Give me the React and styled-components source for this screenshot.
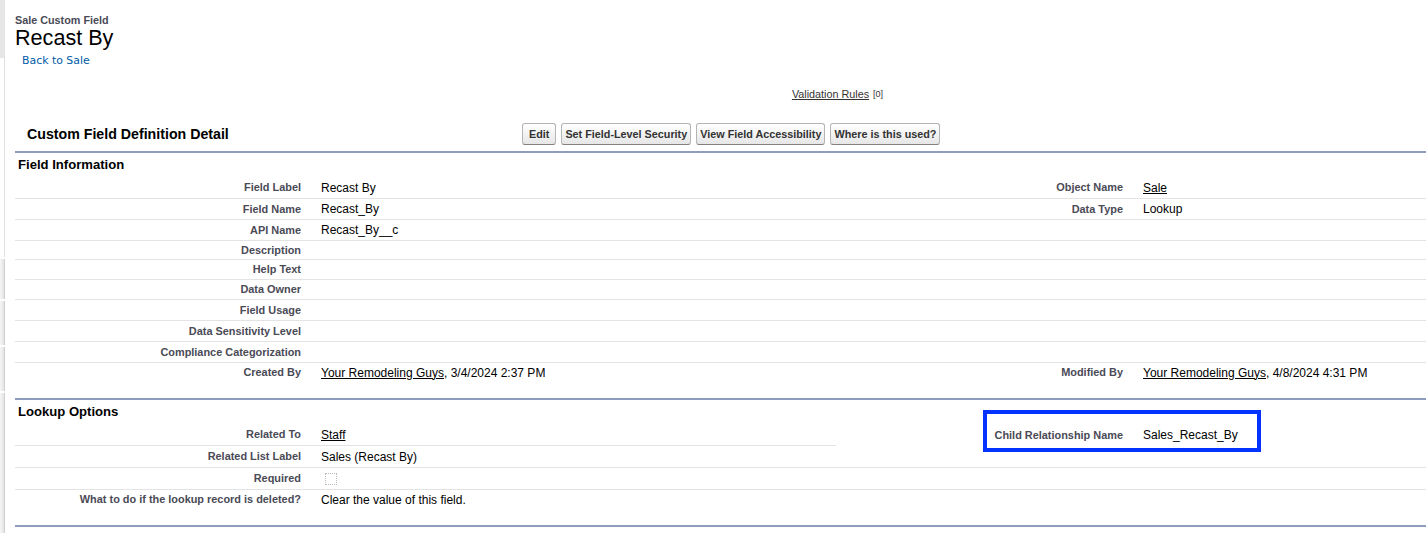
import React from "react";
import styled, { createGlobalStyle } from "styled-components";

const Global = createGlobalStyle`
  html, body { margin: 0; padding: 0; background: #fff; }
  body { font-family: "Liberation Sans", Arial, sans-serif; color: #000; overflow: hidden; }
  * { box-sizing: border-box; }
`;

const Page = styled.div`
  display: flex;
  width: 1426px;
  height: 533px;
  background: #fff;
`;

const Rail = styled.div`
  width: 5px;
  flex: none;
  display: flex;
  flex-direction: column;
`;

const RailTop = styled.div`
  height: 58px;
  background: #e6e6e6;
`;

const RailPanel = styled.div`
  height: 199px;
  border-right: 1px solid #dde1e6;
  background: #fff;
`;

const RailTab = styled.div`
  height: ${(p) => p.$h}px;
  flex: ${(p) => (p.$grow ? 1 : "none")};
  margin-top: 2px;
  background: linear-gradient(to right, #f6f6f6, #e3e3e3);
  border-right: 1px solid #cfcfcf;
`;

const Main = styled.div`
  flex: 1;
  min-width: 0;
  padding-left: 10px;
`;

const TitleBlock = styled.div`
  padding-top: 14px;
`;

const PageType = styled.div`
  font-size: 10.8px;
  line-height: 13px;
  font-weight: bold;
  color: #4a4a56;
`;

const PageTitle = styled.h1`
  margin: 0;
  font-size: 21.6px;
  line-height: 22px;
  font-weight: normal;
  color: #000;
`;

const Breadcrumb = styled.div`
  margin-top: 5px;
  padding-left: 7px;
  font-family: "DejaVu Sans", Verdana, sans-serif;
  font-size: 10.9px;
  line-height: 13px;
  a { color: #015ba7; text-decoration: none; }
`;

const LinkBar = styled.div`
  margin-top: 21px;
  display: flex;
  justify-content: center;
  padding-left: 234px;
  font-size: 10.8px;
  line-height: 13px;
  color: #333;
`;

const Linklet = styled.span`
  color: #333;
  text-decoration: underline;
`;

const Count = styled.span`
  font-size: 9px;
  margin-left: 4px;
  color: #333;
`;

const BlockHeader = styled.div`
  margin-top: 22px;
  display: flex;
  align-items: center;
  padding-bottom: 6px;
`;

const BlockTitle = styled.h2`
  margin: 0;
  width: 507px;
  padding-left: 12px;
  font-size: 14.2px;
  line-height: 18px;
  font-weight: bold;
  color: #000;
`;

const Buttons = styled.div`
  display: flex;
  gap: 5px;
`;

const Button = styled.button`
  height: 22px;
  padding: 0 3px;
  margin: 0;
  font-family: "Liberation Sans", Arial, sans-serif;
  font-size: 10.8px;
  font-weight: bold;
  color: #333;
  white-space: pre;
  border: 1px solid #b5b5b5;
  border-bottom-color: #7f7f7f;
  border-radius: 3px;
  background: linear-gradient(to bottom, #ffffff 0%, #f4f4f4 45%, #e6e6e6 100%);
`;

const Section = styled.section`
  border-top: 2px solid #8e9dbe;
  padding-bottom: 16px;
`;

const SectionTitle = styled.h3`
  margin: 0;
  height: 24px;
  padding: 4px 3px 0;
  font-size: 13.1px;
  line-height: 16px;
  font-weight: bold;
  color: #000;
`;

const Row = styled.div`
  position: relative;
  display: grid;
  grid-template-columns: 296px 525px 297px 1fr;
  height: ${(p) => p.$h}px;
`;

const LabelCell = styled.div`
  display: flex;
  align-items: center;
  justify-content: flex-end;
  padding-right: 10px;
  font-size: 10.92px;
  line-height: 13px;
  font-weight: bold;
  color: #4a4a56;
  text-align: right;
  white-space: nowrap;
  border-bottom: ${(p) => (p.$bare ? "none" : "1px solid #e3e3e3")};
`;

const DataCell = styled.div`
  display: flex;
  align-items: center;
  padding-left: 10px;
  font-size: 12px;
  line-height: 14px;
  color: #000;
  white-space: nowrap;
  border-bottom: ${(p) => (p.$bare ? "none" : "1px solid #e3e3e3")};
`;

const Link = styled.span`
  color: #000;
  text-decoration: underline;
`;

const Checkbox = styled.span`
  display: inline-block;
  width: 12px;
  height: 12px;
  margin-left: 4px;
  border: 1px dotted #bcbcbc;
`;

const Highlight = styled.div`
  position: absolute;
  left: 968px;
  top: -14px;
  width: 278px;
  height: 42px;
  border: 4px solid #0433ff;
  pointer-events: none;
`;

const fieldInfo = [
  { h: 22, l1: "Field Label", v1: "Recast By", l2: "Object Name", v2: <Link>Sale</Link> },
  { h: 21, l1: "Field Name", v1: "Recast_By", l2: "Data Type", v2: "Lookup" },
  { h: 21, l1: "API Name", v1: "Recast_By__c" },
  { h: 19, l1: "Description" },
  { h: 20, l1: "Help Text" },
  { h: 20, l1: "Data Owner" },
  { h: 21, l1: "Field Usage" },
  { h: 21, l1: "Data Sensitivity Level" },
  { h: 21, l1: "Compliance Categorization" },
  {
    h: 19,
    l1: "Created By",
    v1: (
      <>
        <Link>Your Remodeling Guys</Link>, 3/4/2024 2:37 PM
      </>
    ),
    l2: "Modified By",
    v2: (
      <>
        <Link>Your Remodeling Guys</Link>, 4/8/2024 4:31 PM
      </>
    ),
    last: true,
  },
];

const lookup = [
  {
    h: 22,
    l1: "Related To",
    v1: <Link>Staff</Link>,
    l2: "Child Relationship Name",
    v2: "Sales_Recast_By",
    rightBare: true,
    highlight: true,
  },
  { h: 22, l1: "Related List Label", v1: "Sales (Recast By)" },
  { h: 22, l1: "Required", v1: <Checkbox /> },
  {
    h: 19,
    l1: "What to do if the lookup record is deleted?",
    v1: "Clear the value of this field.",
    last: true,
  },
];

function DetailRow({ r }) {
  const leftBare = !!r.last;
  const rightBare = !!r.last || !!r.rightBare;
  return (
    <Row $h={r.h}>
      <LabelCell $bare={leftBare}>{r.l1}</LabelCell>
      <DataCell $bare={leftBare}>{r.v1}</DataCell>
      <LabelCell $bare={rightBare}>{r.l2}</LabelCell>
      <DataCell $bare={rightBare}>{r.v2}</DataCell>
      {r.highlight && <Highlight />}
    </Row>
  );
}

export default function App() {
  return (
    <>
      <Global />
      <Page>
        <Rail>
          <RailTop />
          <RailPanel />
          <RailTab $h={40} />
          <RailTab $h={44} />
          <RailTab $h={44} />
          <RailTab $grow />
        </Rail>
        <Main>
          <TitleBlock>
            <PageType>Sale Custom Field</PageType>
            <PageTitle>Recast By</PageTitle>
            <Breadcrumb>
              <a href="#">Back to Sale</a>
            </Breadcrumb>
          </TitleBlock>
          <LinkBar>
            <Linklet>Validation Rules</Linklet>
            <Count>[0]</Count>
          </LinkBar>
          <BlockHeader>
            <BlockTitle>Custom Field Definition Detail</BlockTitle>
            <Buttons>
              <Button>{" Edit "}</Button>
              <Button>Set Field-Level Security</Button>
              <Button>View Field Accessibility</Button>
              <Button>Where is this used?</Button>
            </Buttons>
          </BlockHeader>
          <Section>
            <SectionTitle>Field Information</SectionTitle>
            {fieldInfo.map((r) => (
              <DetailRow key={r.l1} r={r} />
            ))}
          </Section>
          <Section>
            <SectionTitle>Lookup Options</SectionTitle>
            {lookup.map((r) => (
              <DetailRow key={r.l1} r={r} />
            ))}
          </Section>
          <Section />
        </Main>
      </Page>
    </>
  );
}
